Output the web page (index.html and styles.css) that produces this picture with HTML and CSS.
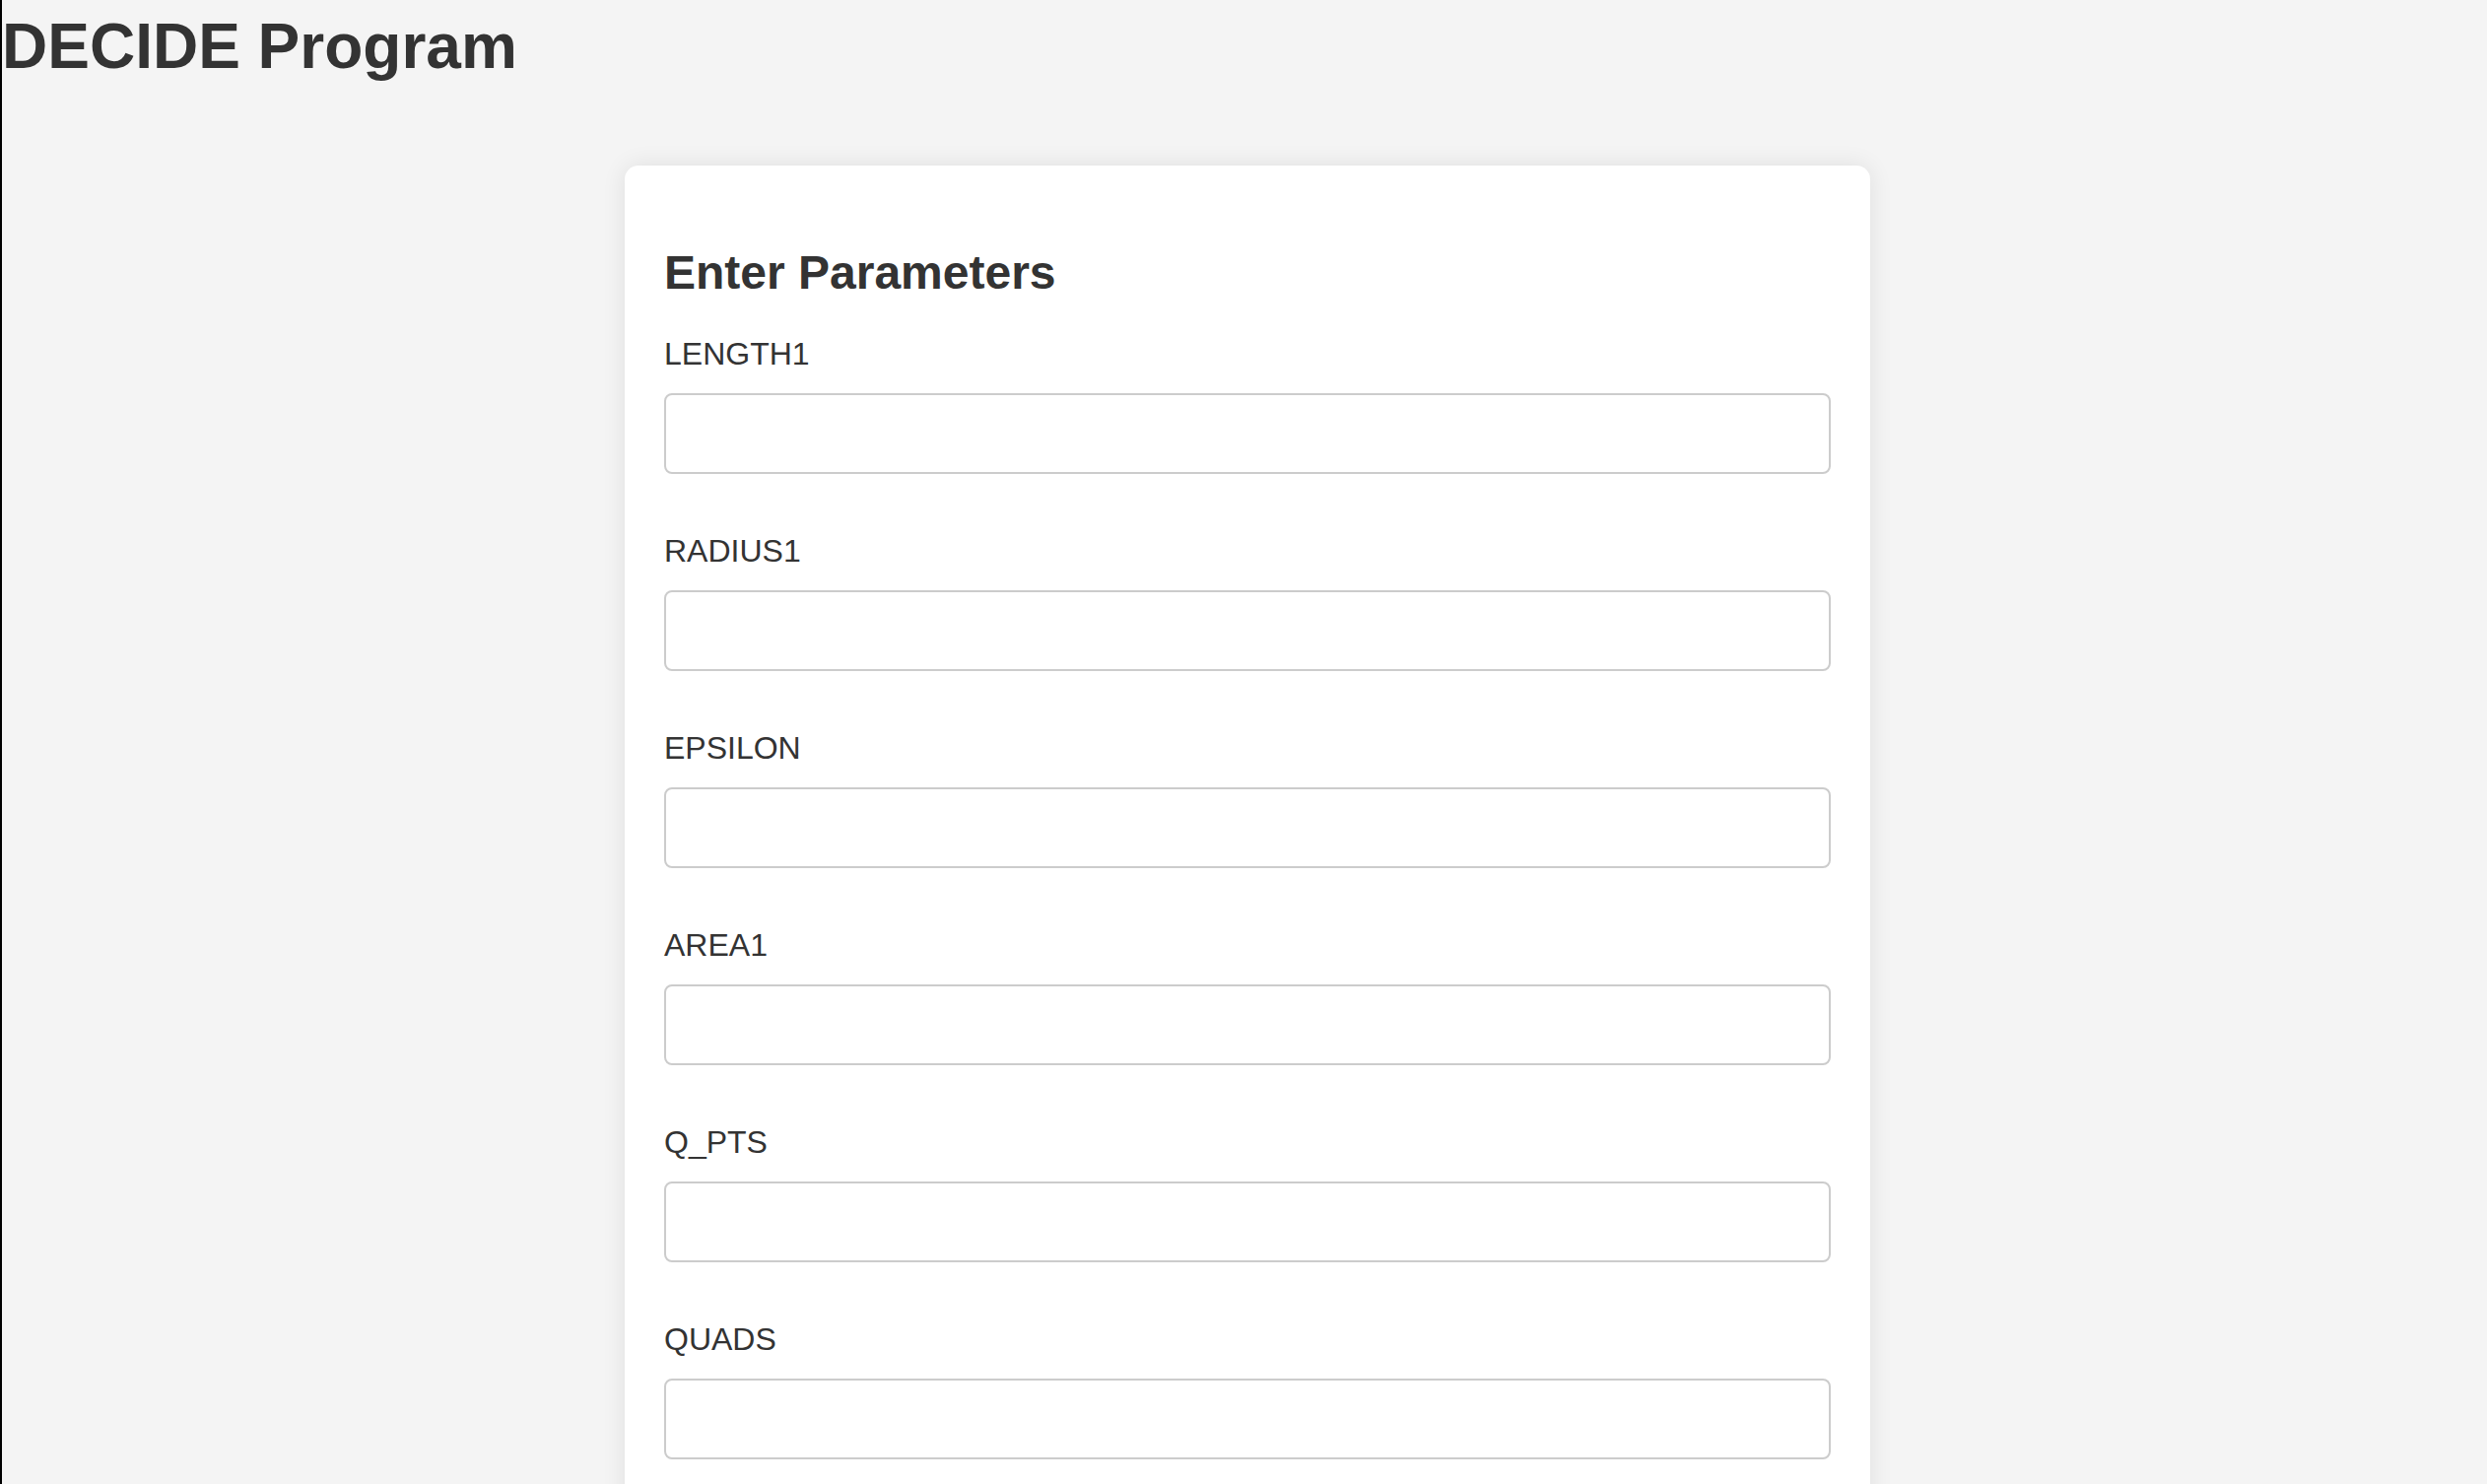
FILE: index.html
```html
<!DOCTYPE html>
<html lang="en">
<head>
<meta charset="utf-8">
<title>DECIDE Program</title>
<link rel="stylesheet" href="styles.css">
</head>
<body>
<h1 class="title">DECIDE Program</h1>
<main class="page">
  <form class="card">
    <h2 class="card-title">Enter Parameters</h2>
    <div class="field">
      <label class="field-label" for="length1">LENGTH1</label>
      <input class="field-input" id="length1" type="text">
    </div>
    <div class="field">
      <label class="field-label" for="radius1">RADIUS1</label>
      <input class="field-input" id="radius1" type="text">
    </div>
    <div class="field">
      <label class="field-label" for="epsilon">EPSILON</label>
      <input class="field-input" id="epsilon" type="text">
    </div>
    <div class="field">
      <label class="field-label" for="area1">AREA1</label>
      <input class="field-input" id="area1" type="text">
    </div>
    <div class="field">
      <label class="field-label" for="qpts">Q_PTS</label>
      <input class="field-input" id="qpts" type="text">
    </div>
    <div class="field">
      <label class="field-label" for="quads">QUADS</label>
      <input class="field-input" id="quads" type="text">
    </div>
  </form>
</main>
</body>
</html>
```
FILE: styles.css
```css
html {
  overflow: hidden;
}
body {
  margin: 0;
  min-height: 100vh;
  box-sizing: border-box;
  border-left: 2px solid #000;
  background: #f4f4f4;
  color: #333;
  font-family: "Liberation Sans", Arial, Helvetica, sans-serif;
}
.title {
  margin: 10px 0 0 0;
  font-size: 64px;
  font-weight: bold;
  line-height: normal;
}
.page {
  padding-left: 6px;
  padding-top: 84px;
}
.card {
  width: 1264px;
  box-sizing: border-box;
  margin: 0 auto;
  padding: 40px;
  background: #fff;
  border-radius: 14px;
  box-shadow: 0 0 24px rgba(0, 0, 0, 0.09);
}
.card-title {
  margin: 41px 0 37px;
  font-size: 48px;
  font-weight: bold;
  line-height: normal;
}
.field {
  display: flex;
  flex-direction: column;
}
.field-label {
  font-size: 32px;
  line-height: normal;
  margin-bottom: 21px;
}
.field-input {
  width: 100%;
  height: 82px;
  box-sizing: border-box;
  margin: 0 0 60px;
  border: 2px solid #ccc;
  border-radius: 8px;
  background: #fff;
  font-size: 32px;
  padding: 0 20px;
  font-family: inherit;
}
```
